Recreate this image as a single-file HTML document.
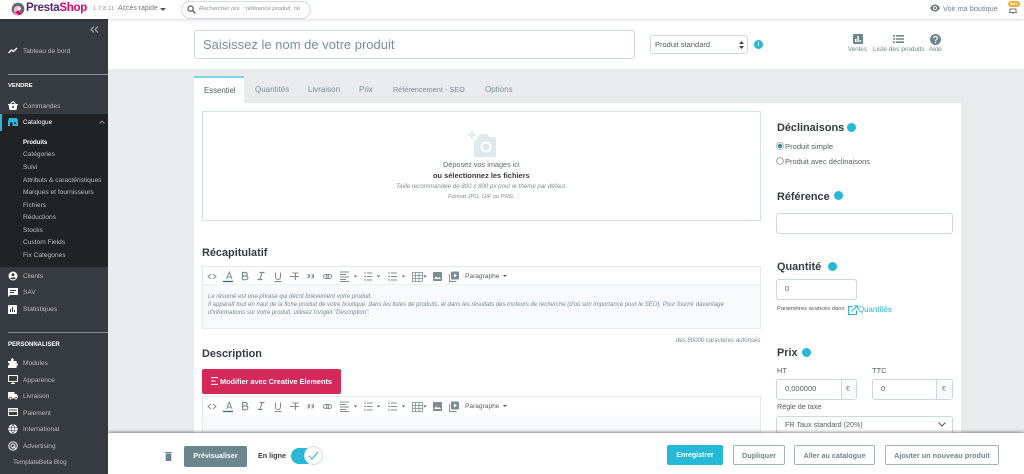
<!DOCTYPE html>
<html lang="fr"><head><meta charset="utf-8"><title>PrestaShop</title>
<style>
*{box-sizing:border-box}
html,body{margin:0;padding:0;width:1024px;height:474px;overflow:hidden;background:#eaebec;font-family:"Liberation Sans",sans-serif;color:#6c868e}
.a{position:absolute}
.t{position:absolute;white-space:nowrap;line-height:1}
.side{font-size:6.6px;color:#bebebe;left:23px}
.sub{font-size:6.6px;color:#bebebe;left:23px}
.dot{position:absolute;width:9px;height:9px;border-radius:50%;background:#25b9d7}
.box{position:absolute;border:1px solid #c9d9dc;border-radius:3px;background:#fff}
.btn{position:absolute;top:445px;height:20px;border:1px solid #9fb2ba;border-radius:2px;background:#fff;font-size:7.3px;font-weight:bold;color:#6c868e;text-align:center;line-height:19px;white-space:nowrap}
svg{position:absolute;display:block}
.tab{position:absolute;top:86px;font-size:8px;color:#7b929a;white-space:nowrap;line-height:1}
.hd{font-size:10.9px;font-weight:bold;color:#363a41}
</style></head><body>

<svg width="0" height="0" style="left:0;top:0"><defs>
<symbol id="tools" viewBox="0 0 320 20" width="320" height="20">
<g fill="none" stroke="#7e8c92">
 <path d="M9 8l-3 2.500L9 13M11 8l3 2.500L11 13"/>
 <path d="M24.500 13l2.800-7L30 13M25.500 11h4"/><path d="M21 15.500h10" stroke="#3f6a76" stroke-width="1.300"/>
 <path d="M40.500 6.500h3a1.600 1.600 0 0 1 0 3.500h-3zm0 3.500h3.500a1.700 1.700 0 0 1 0 3.700h-3.500z" stroke-width="1.200"/>
 <path d="M60 6.500l-2 7M57.500 6.500h5M55.500 13.500h5" stroke-width="1.200"/>
 <path d="M73.500 6.500v4.500a2.500 2.500 0 0 0 5 0V6.500M72.500 15.500h7"/>
 <path d="M90.500 7h6M88 10.500h9M93.500 7v7" stroke-width="1"/>
 <path d="M105.500 9h2v2h-1l-.7 1.500M109.500 9h2v2h-1l-.7 1.500" stroke-width="1.200"/>
 <rect x="121.500" y="8.500" width="5" height="4" rx="2"/><rect x="124.500" y="8.500" width="5" height="4" rx="2"/>
 <path d="M138 6h9M138 8.500h6M138 11h9M138 13.500h6M138 15.500h9" stroke-width=".9"/>
 <path d="M152 9.500h3l-1.500 2z" fill="#555" stroke="none"/>
 <path d="M165 7h5.500M165 10.500h5.500M165 14h5.500M162 7h2M162 10.500h2M162 14h2" stroke-width=".9"/>
 <path d="M175 9.500h3l-1.500 2z" fill="#555" stroke="none"/>
 <path d="M189 7h6M189 10.500h6M189 14h6M186 7h2M186 10.500h2M186 14h2" stroke-width=".9"/>
 <path d="M200 9.500h3l-1.500 2z" fill="#555" stroke="none"/>
 <path d="M210.500 6.500h10v9h-10zM213.500 6.500v9M217 6.500v9M210.500 9.500h10M210.500 12.500h10" stroke-width=".8"/>
 <path d="M221.500 9.500h3l-1.500 2z" fill="#555" stroke="none"/>
 <rect x="231" y="6" width="9" height="9" rx="1" fill="#7e8c92" stroke="none"/><path d="M232 13l2-2.500 2 1.500 1.500-1 1.500 2z" fill="#fff" stroke="none"/>
 <path d="M247.500 8v7.500h7" stroke-width=".9"/><rect x="249" y="5.500" width="8" height="8" rx="1" fill="#7e8c92" stroke="none"/><path d="M252 7.500l3 2-3 2z" fill="#fff" stroke="none"/>
</g>
</symbol></defs></svg>

<!-- main sub header -->
<div class="a" style="left:108px;top:19px;width:916px;height:50px;background:#fff"></div>
<!-- top header -->
<div class="a" style="left:0;top:0;width:1024px;height:19px;background:#fff;box-shadow:0 1px 3px rgba(0,0,0,.15);z-index:5">
  <svg style="left:11px;top:2px" width="14" height="14" viewBox="0 0 15 15"><circle cx="7.500" cy="7.500" r="6.800" fill="#5f6a72"/><path d="M3 9a4.500 4.500 0 0 1 4-5l3 1-1 4 2 3-3 2-4-1z" fill="#f4b9cb"/><circle cx="9" cy="7" r="1.600" fill="#fff"/><path d="M4 11l4-2 3 3-2 2z" fill="#df0067"/></svg>
  <span class="t" style="left:26px;top:3px;font-size:11.500px;font-weight:bold;color:#4c2a6d;letter-spacing:-.3px">Presta<span style="color:#df0067">Shop</span></span>
  <span class="t" style="left:93px;top:7px;font-size:5.500px;color:#8a8f94;letter-spacing:.25px">1.7.8.11</span>
  <span class="t" style="left:118px;top:6px;font-size:6.900px;color:#6c757b">Accès rapide</span>
  <div class="a" style="left:160px;top:8px;border:3px solid transparent;border-top:3px solid #555;border-bottom:0"></div>
  <div class="a" style="left:181px;top:1px;width:130px;height:18px;border:1px solid #cfdde0;border-radius:9px;background:#fff"></div>
  <svg style="left:187px;top:5px" width="9" height="9" viewBox="0 0 9 9" fill="none" stroke="#555" stroke-width="1.200"><circle cx="3.600" cy="3.600" r="2.600"/><path d="M5.600 5.600L8.400 8.400"/></svg>
  <span class="t" style="left:199px;top:7px;font-size:5.900px;font-style:italic;color:#868e94">Rechercher (ex. : référence produit, no</span>
  <svg style="left:930px;top:4px" width="10" height="8" viewBox="0 0 10 8"><path d="M0 4C2 1 3.500 .5 5 .5S8 1 10 4C8 7 6.500 7.500 5 7.500S2 7 0 4z" fill="#6c7a80"/><circle cx="5" cy="4" r="2" fill="#fff"/><circle cx="5" cy="4" r="1.100" fill="#6c7a80"/></svg>
  <span class="t" style="left:943px;top:5px;font-size:7.300px;color:#6c868e">Voir ma boutique</span>
  <svg style="left:1008px;top:6px" width="10" height="8" viewBox="0 0 10 8" fill="none" stroke="#6c7a80"><path d="M2 6V3h6v3M1 6.500h8M5 7v1"/></svg>
  <div class="a" style="left:1008px;top:1px;width:12px;height:6px;border-radius:3px;background:#f0ad2e"></div>
  <span class="t" style="left:1010px;top:2px;font-size:4px;font-weight:bold;color:#fff">BIG</span>
</div>

<!-- sidebar -->
<div class="a" style="left:0;top:19px;width:108px;height:455px;background:#363a41;z-index:4"></div>
<div class="a" style="left:0;top:114px;width:108px;height:153px;background:#202226;z-index:4"></div>
<div class="a" style="left:0;top:114px;width:2px;height:17px;background:#25b9d7;z-index:4"></div>
<div class="a" style="left:8px;top:74px;width:100px;height:1px;background:#8b9096;z-index:4"></div>
<div class="a" style="left:8px;top:332px;width:100px;height:1px;background:#8b9096;z-index:4"></div>
<div class="a" style="left:0;top:0;width:108px;height:474px;z-index:6">
  <svg style="left:90px;top:26px" width="9" height="7" viewBox="0 0 9 7" fill="none" stroke="#b5b8bc" stroke-width="1"><path d="M4 .5L1 3.500 4 6.500M8 .5L5 3.500 8 6.500"/></svg>
  <svg style="left:8px;top:47px" width="10" height="7" viewBox="0 0 10 7" fill="none" stroke="#fff" stroke-width="1.300"><path d="M.5 6L3.500 3l2 1.500L9 1"/></svg>
  <span class="t side" style="top:49px">Tableau de bord</span>
  <span class="t" style="left:8px;top:84px;font-size:5.900px;font-weight:bold;color:#fff">VENDRE</span>

  <svg style="left:8px;top:101px" width="10" height="9" viewBox="0 0 10 9"><path d="M0 3h10v1H9.300L8.500 9h-7L.7 4H0z" fill="#fff"/><path d="M2.500 3L5 .5 7.500 3" stroke="#fff" fill="none"/><circle cx="5" cy="6" r="1" fill="#363a41"/></svg>
  <span class="t side" style="top:104px">Commandes</span>

  <svg style="left:8px;top:118px" width="10" height="8" viewBox="0 0 10 8"><path d="M1 0h8l1 3v5H0V3z" fill="#25b9d7"/><path d="M2 4.500h2.500V8H2zM6 4.500h2V6H6z" fill="#202226"/></svg>
  <span class="t" style="left:23px;top:120px;font-size:6.400px;color:#fff">Catalogue</span>
  <svg style="left:99px;top:120px" width="6" height="4" viewBox="0 0 6 4" fill="none" stroke="#8d9094"><path d="M.5 3.500L3 1l2.500 2.500"/></svg>

  <span class="t sub" style="top:140px;color:#fff;font-weight:bold;font-size:6px">Produits</span>
  <span class="t sub" style="top:152px">Catégories</span>
  <span class="t sub" style="top:165px">Suivi</span>
  <span class="t sub" style="top:178px">Attributs &amp; caractéristiques</span>
  <span class="t sub" style="top:190px">Marques et fournisseurs</span>
  <span class="t sub" style="top:203px">Fichiers</span>
  <span class="t sub" style="top:215px">Réductions</span>
  <span class="t sub" style="top:228px">Stocks</span>
  <span class="t sub" style="top:240px">Custom Fields</span>
  <span class="t sub" style="top:253px">Fix Categories</span>

  <svg style="left:8px;top:271px" width="10" height="10" viewBox="0 0 10 10"><circle cx="5" cy="5" r="4.500" fill="#fff"/><circle cx="5" cy="3.800" r="1.500" fill="#363a41"/><path d="M2.200 7.500C3 6 7 6 7.800 7.500 7 8.500 3 8.500 2.200 7.500z" fill="#363a41"/></svg>
  <span class="t side" style="top:274px">Clients</span>
  <svg style="left:8px;top:288px" width="10" height="9" viewBox="0 0 10 9"><path d="M0 0h10v7H2L0 9z" fill="#fff"/><path d="M2 2.500h6M2 4.500h4" stroke="#363a41"/></svg>
  <span class="t side" style="top:290px">SAV</span>
  <svg style="left:8px;top:305px" width="9" height="9" viewBox="0 0 9 9"><rect width="9" height="9" rx="1" fill="#fff"/><path d="M2 4h1v3H2zM4 2h1v5H4zM6 5h1v2H6z" fill="#363a41"/></svg>
  <span class="t side" style="top:307px">Statistiques</span>

  <span class="t" style="left:8px;top:342px;font-size:6px;font-weight:bold;color:#fff">PERSONNALISER</span>
  <svg style="left:8px;top:358px" width="10" height="10" viewBox="0 0 10 10"><path d="M0 3h3V1.500a1.300 1.300 0 0 1 2.600 0V3h3v2.200a1.300 1.300 0 0 1 0 2.600V10H0V7.500a1.300 1.300 0 0 0 0-2.600z" fill="#fff"/></svg>
  <span class="t side" style="top:361px">Modules</span>
  <svg style="left:8px;top:375px" width="10" height="9" viewBox="0 0 10 9" fill="none" stroke="#fff"><rect x=".5" y=".5" width="9" height="6" rx=".5" stroke-width="1.100"/><path d="M3 8.500h4M5 7v1.500"/></svg>
  <span class="t side" style="top:378px">Apparence</span>
  <svg style="left:8px;top:392px" width="10" height="8" viewBox="0 0 10 8"><path d="M0 0h6.500v2H8.500L10 4v2.500H0z" fill="#fff"/><circle cx="2.500" cy="6.500" r="1.300" fill="#fff" stroke="#363a41" stroke-width=".6"/><circle cx="8" cy="6.500" r="1.300" fill="#fff" stroke="#363a41" stroke-width=".6"/></svg>
  <span class="t side" style="top:394px">Livraison</span>
  <svg style="left:8px;top:408px" width="10" height="8" viewBox="0 0 10 8"><rect width="10" height="8" rx=".8" fill="#fff"/><path d="M1 1.500h8v1H1zM1 4h8v3H1z" fill="#363a41"/></svg>
  <span class="t side" style="top:411px">Paiement</span>
  <svg style="left:8px;top:424px" width="10" height="10" viewBox="0 0 10 10" fill="none" stroke="#fff"><circle cx="5" cy="5" r="4.200" fill="#fff"/><path d="M.5 3.500h9M.5 6.500h9M5 .5c-2.500 3-2.500 6 0 9M5 .5c2.500 3 2.500 6 0 9" stroke="#363a41" stroke-width=".6"/></svg>
  <span class="t side" style="top:427px">International</span>
  <svg style="left:8px;top:441px" width="10" height="10" viewBox="0 0 10 10" fill="none" stroke="#d8d8d8"><circle cx="5" cy="5" r="4.200" stroke-width="1.200"/><circle cx="5" cy="5" r="2" stroke-width="1.200"/><path d="M5 5l3 3" stroke="#fff"/></svg>
  <span class="t side" style="top:444px">Advertising</span>
  <span class="t side" style="left:13px;top:460px;font-size:6.400px">TemplateBeta Blog</span>
</div>

<!-- title row -->
<div class="box" style="left:194px;top:30px;width:441px;height:29px"></div>
<span class="t" style="left:203px;top:38px;font-size:13px;color:#7a8f96">Saisissez le nom de votre produit</span>
<div class="box" style="left:650px;top:35px;width:98px;height:19px"></div>
<span class="t" style="left:655px;top:41px;font-size:7.500px;color:#555d62">Produit standard</span>
<svg style="left:739px;top:41px" width="5" height="8" viewBox="0 0 5 8" fill="#444"><path d="M2.500 0L5 3H0zM2.500 8L0 5h5z"/></svg>
<div class="dot" style="left:754px;top:40px"></div>
<span class="t" style="left:757.500px;top:42px;font-size:6px;font-weight:bold;color:#fff">i</span>

<svg style="left:853px;top:34px" width="10" height="10" viewBox="0 0 10 10"><rect width="10" height="10" rx="1" fill="#6c868e"/><path d="M2 5h1.500v3H2zM4.300 2h1.500v6H4.300zM6.600 6h1.500v2H6.600z" fill="#fff"/></svg>
<span class="t" style="left:848px;top:47px;font-size:6.200px;color:#6c868e">Ventes</span>
<svg style="left:893px;top:35px" width="11" height="8" viewBox="0 0 11 8" fill="#6c868e"><path d="M0 0h2v1.600H0zM3 0h8v1.600H3zM0 3.200h2v1.600H0zM3 3.200h8v1.600H3zM0 6.400h2V8H0zM3 6.400h8V8H3z"/></svg>
<span class="t" style="left:873px;top:47px;font-size:6.600px;color:#6c868e">Liste des produits</span>
<svg style="left:930px;top:34px" width="11" height="11" viewBox="0 0 11 11"><circle cx="5.500" cy="5.500" r="5.500" fill="#6c868e"/><path d="M3.700 4.200a1.800 1.800 0 1 1 2.700 1.500c-.7.400-.9.700-.9 1.300" fill="none" stroke="#fff" stroke-width="1.100"/><circle cx="5.500" cy="8.500" r=".7" fill="#fff"/></svg>
<span class="t" style="left:929px;top:47px;font-size:6.400px;color:#6c868e">Aide</span>

<!-- tabs -->
<div class="a" style="left:194px;top:76px;width:50px;height:27px;background:#fff;border-top:2px solid #7cd5e7"></div>
<span class="tab" style="left:204px;top:87px;color:#525e63;font-size:7.800px">Essentiel</span>
<span class="tab" style="left:255px">Quantités</span>
<span class="tab" style="left:308px">Livraison</span>
<span class="tab" style="left:359px">Prix</span>
<span class="tab" style="left:393px;font-size:7.300px">Référencement - SEO</span>
<span class="tab" style="left:485px">Options</span>

<!-- content panel -->
<div class="a" style="left:194px;top:103px;width:767px;height:331px;background:#fff"></div>

<!-- dropzone -->
<div class="a" style="left:202px;top:111px;width:559px;height:110px;border:1px solid #d3e3e6;background:#fff"></div>
<svg style="left:465px;top:129px" width="32" height="29" viewBox="0 0 32 29"><path d="M3 5h3V2h2v3h3v2H8v3H6V7H3z" fill="#dfe8eb"/><path d="M9 11h3V8h1l2-3h7l2 3h6a1 1 0 0 1 1 1v18a1 1 0 0 1-1 1H10a1 1 0 0 1-1-1z" fill="#dfe8eb"/><circle cx="21" cy="18" r="5.500" fill="#fff"/><circle cx="21" cy="18" r="3.500" fill="#dfe8eb"/></svg>
<span class="t" style="left:443px;top:161px;font-size:7.300px;color:#5e6a70">Déposez vos images ici</span>
<span class="t" style="left:433px;top:172px;font-size:7.450px;font-weight:bold;color:#363a41">ou sélectionnez les fichiers</span>
<span class="t" style="left:396px;top:184px;font-size:6.150px;font-style:italic;color:#838d92">Taille recommandée de 800 x 800 px pour le thème par défaut.</span>
<span class="t" style="left:448px;top:195px;font-size:5.700px;font-style:italic;color:#838d92">Format JPG, GIF ou PNG.</span>

<!-- recap -->
<span class="t hd" style="left:202px;top:248px">Récapitulatif</span>
<div class="a" style="left:202px;top:266px;width:559px;height:63px;border:1px solid #e6e9ea;background:#f8fafb"></div>
<div class="a" style="left:203px;top:267px;width:557px;height:18px;background:#fff;border-bottom:1px solid #eef0f1"></div>
<svg style="left:202px;top:266px" width="320" height="20" viewBox="0 0 320 20"><use href="#tools"/></svg>
<span class="t" style="left:465px;top:274px;font-size:6.600px;color:#555d62">Paragraphe</span>
<div class="a" style="left:503px;top:275px;border:2px solid transparent;border-top:2.500px solid #555;border-bottom:0"></div>
<span class="t" style="left:208px;top:294px;font-size:6px;font-style:italic;color:#758a92">Le résumé est une phrase qui décrit brièvement votre produit.</span>
<span class="t" style="left:208px;top:302px;font-size:6px;font-style:italic;color:#758a92">Il apparaît tout en haut de la fiche produit de votre boutique, dans les listes de produits, et dans les résultats des moteurs de recherche (d'où son importance pour le SEO). Pour fournir davantage</span>
<span class="t" style="left:208px;top:310px;font-size:6px;font-style:italic;color:#758a92">d'informations sur votre produit, utilisez l'onglet "Description".</span>
<span class="t" style="left:676px;top:338px;font-size:6.050px;font-style:italic;color:#7a8b92">des 80000 caractères autorisés</span>

<!-- description -->
<span class="t hd" style="left:202px;top:349px">Description</span>
<div class="a" style="left:202px;top:369px;width:139px;height:25px;background:#d5295c;border-radius:2px"></div>
<svg style="left:211px;top:377px" width="7" height="8" viewBox="0 0 7 8" stroke="#fff"><path d="M0 .6h7M0 4h4.500M0 7.400h7"/></svg>
<span class="t" style="left:220px;top:378px;font-size:7.300px;font-weight:bold;color:#fff">Modifier avec Creative Elements</span>
<div class="a" style="left:202px;top:396px;width:559px;height:40px;border:1px solid #e6e9ea;background:#f8fafb"></div>
<div class="a" style="left:203px;top:397px;width:557px;height:18px;background:#fff"></div>
<svg style="left:202px;top:396px" width="320" height="20" viewBox="0 0 320 20"><use href="#tools"/></svg>
<span class="t" style="left:465px;top:404px;font-size:6.600px;color:#555d62">Paragraphe</span>
<div class="a" style="left:503px;top:405px;border:2px solid transparent;border-top:2.500px solid #555;border-bottom:0"></div>

<!-- right column -->
<span class="t hd" style="left:777px;top:123px">Déclinaisons</span>
<div class="dot" style="left:847px;top:123px"></div>
<svg style="left:776px;top:142px" width="8" height="8" viewBox="0 0 8 8"><circle cx="4" cy="4" r="3.500" fill="#fff" stroke="#9aa" stroke-width=".7"/><circle cx="4" cy="4" r="2.300" fill="#3f8b98"/></svg>
<span class="t" style="left:785px;top:143px;font-size:7.600px;color:#555d62">Produit simple</span>
<svg style="left:776px;top:157px" width="8" height="8" viewBox="0 0 8 8"><circle cx="4" cy="4" r="3.300" fill="#fff" stroke="#777" stroke-width=".7"/></svg>
<span class="t" style="left:785px;top:158px;font-size:7.500px;color:#555d62">Produit avec déclinaisons</span>

<span class="t hd" style="left:777px;top:192px">Référence</span>
<div class="dot" style="left:834px;top:191px"></div>
<div class="box" style="left:776px;top:213px;width:177px;height:21px"></div>

<span class="t hd" style="left:777px;top:262px">Quantité</span>
<div class="dot" style="left:828px;top:262px"></div>
<div class="box" style="left:776px;top:279px;width:81px;height:21px"></div>
<span class="t" style="left:785px;top:285px;font-size:7.500px;color:#555d62">0</span>
<span class="t" style="left:777px;top:307px;font-size:5.800px;color:#555">Paramètres avancés dans</span>
<svg style="left:848px;top:305px" width="10" height="10" viewBox="0 0 10 10" fill="none" stroke="#25b9d7"><path d="M8.500 5.500V9.500H.5V1.500H4.500"/><path d="M3.500 6.500L9 1M6 .7h3.300V4"/></svg>
<span class="t" style="left:858px;top:306px;font-size:7.900px;color:#25b9d7">Quantités</span>

<span class="t hd" style="left:777px;top:348px">Prix</span>
<div class="dot" style="left:802px;top:348px"></div>
<span class="t" style="left:777px;top:367px;font-size:7.500px;color:#555d62">HT</span>
<span class="t" style="left:872px;top:367px;font-size:7.500px;color:#555d62">TTC</span>
<div class="box" style="left:776px;top:379px;width:81px;height:21px"></div>
<div class="a" style="left:841px;top:380px;width:15px;height:19px;background:#f8fafb;border-left:1px solid #c9d9dc"></div>
<span class="t" style="left:785px;top:385px;font-size:7.500px;color:#555d62">0,000000</span>
<span class="t" style="left:846px;top:386px;font-size:7px;color:#6c868e">€</span>
<div class="box" style="left:872px;top:379px;width:81px;height:21px"></div>
<div class="a" style="left:936px;top:380px;width:16px;height:19px;background:#f8fafb;border-left:1px solid #c9d9dc"></div>
<span class="t" style="left:881px;top:385px;font-size:7.500px;color:#555d62">0</span>
<span class="t" style="left:942px;top:386px;font-size:7px;color:#6c868e">€</span>
<span class="t" style="left:777px;top:403px;font-size:7.200px;color:#555d62">Règle de taxe</span>
<div class="box" style="left:776px;top:416px;width:177px;height:22px"></div>
<span class="t" style="left:785px;top:421px;font-size:7.200px;color:#555d62">FR Taux standard (20%)</span>
<svg style="left:938px;top:422px" width="8" height="5" viewBox="0 0 8 5" fill="none" stroke="#555" stroke-width="1.100"><path d="M.5 .5L4 4 7.500 .5"/></svg>

<!-- footer -->
<div class="a" style="left:108px;top:433px;width:916px;height:41px;background:#fff;box-shadow:0 -1px 3px rgba(0,0,0,.45);z-index:3"></div>
<div class="a" style="left:108px;top:433px;width:916px;height:41px;z-index:3">
  <svg style="left:57px;top:19px" width="7" height="9" viewBox="0 0 7 9" fill="#6c868e"><path d="M0 0h7v1H0zM.7 1.500h5.600V9H.7z"/></svg>
  <div class="a" style="left:76px;top:13px;width:63px;height:21px;background:#6c868e;border-radius:2px;color:#fff;font-size:7.100px;font-weight:bold;text-align:center;line-height:20px">Prévisualiser</div>
  <span class="t" style="left:150px;top:19px;font-size:7.200px;font-weight:bold;color:#363a41">En ligne</span>
  <div class="a" style="left:183px;top:15px;width:24px;height:16px;border-radius:8px 0 0 8px;background:#25b9d7"></div>
  <div class="a" style="left:196px;top:13px;width:19px;height:19px;border-radius:50%;background:#fff;border:1px solid #d3e3e6"></div>
  <svg style="left:200px;top:18px" width="11" height="9" viewBox="0 0 11 9" fill="none" stroke="#25b9d7" stroke-width="1"><path d="M1 5l3 3 6-7"/></svg>
</div>
<div class="btn" style="left:667px;width:56px;background:#25b9d7;border-color:#25b9d7;color:#fff;z-index:3;font-size:7px;line-height:20px">Enregistrer</div>
<div class="btn" style="left:733px;width:52px;z-index:3">Dupliquer</div>
<div class="btn" style="left:794px;width:81px;z-index:3;font-size:7.200px">Aller au catalogue</div>
<div class="btn" style="left:885px;width:114px;z-index:3;font-size:7.300px">Ajouter un nouveau produit</div>
</body></html>
